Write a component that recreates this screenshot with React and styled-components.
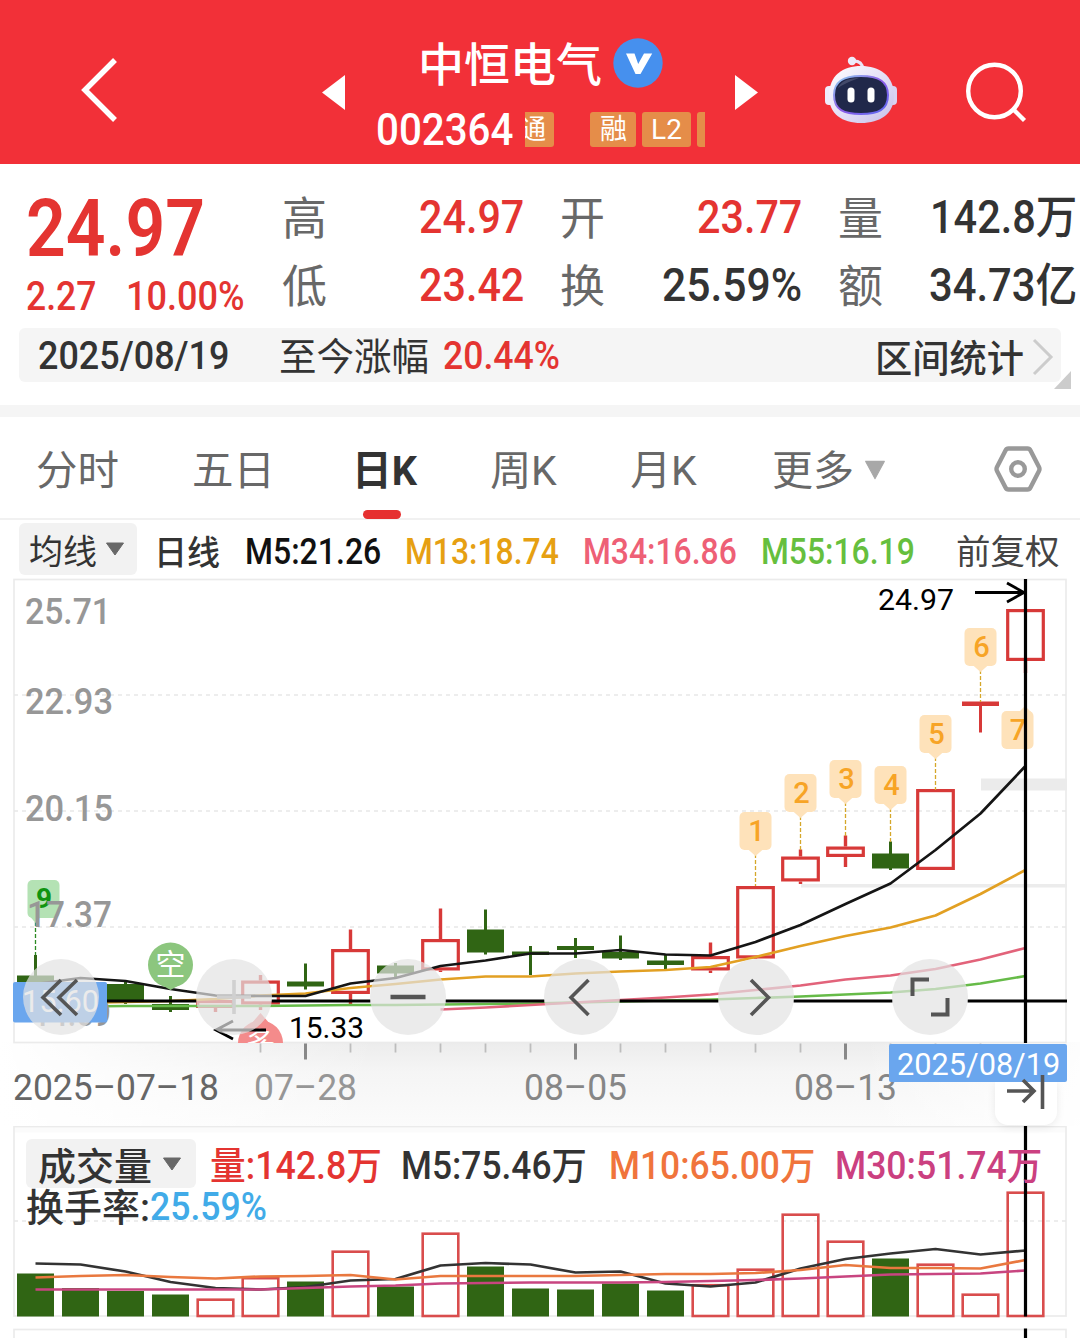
import React, { useLayoutEffect, useRef, useState } from "react";
import styled, { createGlobalStyle } from "styled-components";

const RED = "#e43431";
const GREEN = "#306514";
const FONT = `Roboto, "Noto Sans CJK SC", sans-serif`;

const Global = createGlobalStyle`
  * { box-sizing: border-box; }
  body { margin: 0; background: #fff; font-family: ${FONT}; overflow: hidden; }
  button { border: 0; padding: 0; background: none; font: inherit; color: inherit; }
`;

/* Text condensed or widened horizontally to a given width */
const FitBox = styled.span`
  display: block;
  flex: none;
  width: ${(p) => p.$w}px;
  height: ${(p) => p.$size}px;
  line-height: ${(p) => p.$size}px;
  font-size: ${(p) => p.$size}px;
  font-weight: ${(p) => p.$weight || 400};
  color: ${(p) => p.$color || "inherit"};
  white-space: nowrap;
  transform: translateY(${(p) => p.$dy || 0}px);
`;
const FitInner = styled.span`
  display: inline-block;
  transform-origin: 0 50%;
`;
function Fit({ w, size, weight, color, dy, children }) {
  const ref = useRef(null);
  const [scale, setScale] = useState(1);
  useLayoutEffect(() => {
    setScale(w / ref.current.offsetWidth);
  }, [w]);
  return (
    <FitBox $w={w} $size={size} $weight={weight} $color={color} $dy={dy}>
      <FitInner ref={ref} style={{ transform: `scaleX(${scale})` }}>{children}</FitInner>
    </FitBox>
  );
}

const Page = styled.div`
  width: 1080px;
  height: 1338px;
  overflow: hidden;
  display: flex;
  flex-direction: column;
  background: #fff;
`;

/* Header */
const Header = styled.header`
  flex: none;
  height: 164px;
  background: #f23038;
  color: #fff;
  display: grid;
  grid-template-columns: 81px 241px 54px 359px 90px 141px 1fr;
  align-items: start;
`;
const IconSlot = styled.div`
  padding-top: ${(p) => p.$top}px;
  line-height: 0;
`;
const Center = styled.div`
  display: flex;
  flex-direction: column;
  padding-top: 38px;
`;
const TitleRow = styled.div`
  display: flex;
  align-items: center;
  gap: 11px;
  height: 50px;
  padding-left: 42px;
`;
const CodeRow = styled.div`
  display: flex;
  align-items: center;
  height: 36px;
  margin-top: 23px;
`;
const Tag = styled.span`
  flex: none;
  display: flex;
  align-items: center;
  justify-content: ${(p) => p.$align || "center"};
  width: ${(p) => p.$w}px;
  height: 35px;
  margin-left: ${(p) => p.$gap}px;
  background: #e58d49;
  border-radius: ${(p) => p.$radius || "3px"};
  font-size: 28px;
  line-height: 35px;
  overflow: hidden;
`;

/* Quote */
const Quote = styled.section`
  flex: none;
  height: 164px;
  display: grid;
  grid-template-columns: 256px 1fr;
  padding-left: 26px;
`;
const PriceCol = styled.div`
  padding-top: 26px;
`;
const ChangeRow = styled.div`
  display: flex;
  gap: 30px;
  margin-top: 8px;
`;
const Stats = styled.div`
  display: grid;
  grid-template-columns: 46px 196px 36px 46px 196px 36px 46px 193px;
  grid-template-rows: 68px 68px;
  align-items: center;
  padding-top: 19px;
  height: 155px;
`;
const StatValue = styled.div`
  display: flex;
  justify-content: flex-end;
`;
const Gap = styled.span``;

const RangeBar = styled.section`
  flex: none;
  display: flex;
  align-items: center;
  height: 54px;
  margin: 0 19px;
  padding-left: 19px;
  background: #f5f5f5;
  border-radius: 6px;
  color: #333;
  position: relative;
`;
const Spacer = styled.span`
  flex: none;
  width: ${(p) => p.$w}px;
`;
const Corner = styled.svg`
  position: absolute;
  right: -10px;
  bottom: -7px;
`;
const Band = styled.div`
  flex: none;
  height: 12px;
  margin-top: 23px;
  background: #f5f5f5;
`;

/* Tabs */
const Tabs = styled.nav`
  flex: none;
  height: 103px;
  display: grid;
  grid-template-columns: 156px 161px 138px 140px 142px 222px 1fr;
  padding-left: 35px;
  border-bottom: 2px solid #f1f1f1;
  color: #686868;
`;
const Tab = styled.button`
  position: relative;
  display: flex;
  align-items: center;
  justify-content: flex-start;
  gap: 10px;
  height: 101px;
  padding-top: ${(p) => (p.$icon ? 2 : 5)}px;
  color: ${(p) => (p.$active ? "#333" : "inherit")};
`;
const Underline = styled.i`
  position: absolute;
  left: 11px;
  bottom: -1px;
  width: 38px;
  height: 9px;
  border-radius: 5px;
  background: #e63030;
`;

const Legend = styled.div`
  flex: none;
  display: flex;
  align-items: center;
  height: 58px;
  padding-left: 19px;
  color: #333;
`;
const Picker = styled.button`
  flex: none;
  display: flex;
  align-items: center;
  gap: ${(p) => p.$gap}px;
  width: ${(p) => p.$w}px;
  height: ${(p) => p.$h}px;
  padding-left: ${(p) => p.$pad}px;
  border-radius: 6px;
  background: #f2f2f2;
`;

const ChartArea = styled.section`
  flex: none;
  position: relative;
  height: 548px;
`;
const Layer = styled.svg`
  display: block;
  font-family: ${FONT};
`;
const RoundButton = styled.button`
  position: absolute;
  left: ${(p) => p.$x - 38}px;
  top: 380.5px;
  width: 76px;
  height: 76px;
  border-radius: 50%;
  background: rgba(226, 226, 226, 0.7);
  line-height: 0;
`;
const JumpButton = styled.button`
  position: absolute;
  left: 995px;
  top: 504px;
  width: 62px;
  height: 43px;
  border-radius: 0 0 13px 13px;
  background: #fff;
  box-shadow: 0 2px 8px rgba(0, 0, 0, 0.08);
`;
const CrossDate = styled.div`
  position: absolute;
  left: 889px;
  top: 466px;
  width: 178px;
  height: 38px;
  border-radius: 2px;
  background: #6aa6ee;
  color: #fff;
  display: flex;
  align-items: center;
  padding-left: 8px;
`;
const JumpIcon = styled.svg`
  position: absolute;
  left: 1004px;
  top: 494px;
`;

const Volume = styled.section`
  flex: none;
  display: grid;
  height: 212px;
  > * { grid-area: 1 / 1; }
`;
const VolumeText = styled.div`
  z-index: 1;
  padding: 13px 0 0 26px;
  color: #333;
`;
const VolumeRow = styled.div`
  display: flex;
  align-items: center;
  height: ${(p) => p.$h}px;
`;

const Caret = ({ w, h, color = "#686868" }) => (
  <svg width={w} height={h} viewBox="0 0 20 14" preserveAspectRatio="none">
    <path d="M1.5 1h17L10 13z" fill={color} stroke={color} strokeLinejoin="round" />
  </svg>
);

const Robot = () => (
  <svg width="73" height="70" viewBox="0 0 73 70">
    <defs>
      <linearGradient id="shell" x1="0" y1="0" x2="1" y2="1">
        <stop offset="0" stopColor="#fff" />
        <stop offset=".55" stopColor="#e2ddf6" />
        <stop offset="1" stopColor="#c5bfe8" />
      </linearGradient>
      <linearGradient id="rim" x1="0" y1="0" x2="1" y2="1">
        <stop offset="0" stopColor="#8ed2ee" />
        <stop offset=".5" stopColor="#8e5be8" />
        <stop offset="1" stopColor="#5a6cf0" />
      </linearGradient>
    </defs>
    <path d="M27 6q10-1 11 8" fill="none" stroke="#ebe5f7" strokeWidth="3" />
    <circle cx="27" cy="6" r="4.2" fill="#eeeafa" />
    <rect x="0" y="31" width="10" height="19" rx="4" fill="#efecfb" />
    <rect x="62" y="31" width="10" height="19" rx="4" fill="#d9d3f1" />
    <path d="M36 11C54 11 69 20 69 41c0 18-14 27-33 27S4 59 4 41C4 20 18 11 36 11z" fill="url(#shell)" />
    <path d="M36 21c17 0 27 5 27 19 0 15-10 19-27 19S9 55 9 40c0-14 10-19 27-19z" fill="#20284a" stroke="url(#rim)" strokeWidth="2" />
    <path d="M13 33q4-10 21-10Q20 28 13 33z" fill="#5b6180" opacity=".6" />
    <rect x="22.5" y="32.5" width="7" height="15" rx="3.5" fill="#fff" />
    <rect x="42.5" y="32.5" width="7" height="15" rx="3.5" fill="#fff" />
  </svg>
);

const X = (i) => 35.5 + i * 45;

/* [type, body top, body bottom, wick top, wick bottom] */
const candles = [
  ["g", 975.5, 1000, 955, 1002], ["g", 986, 1000, 984, 1003], ["g", 984, 1000, 980, 1004],
  ["g", 1004, 1010, 996, 1012], ["r", 1000, 1008, 1000, 1012], ["r", 980.5, 1004.5, 975, 1010],
  ["g", 981.5, 986.5, 963.5, 989.5], ["r", 949, 994, 929.5, 1004], ["g", 965.5, 973.5, 963, 978],
  ["r", 939, 970.5, 908.5, 972], ["g", 929.5, 952.5, 909.5, 954.5], ["g", 951.5, 955, 946, 975],
  ["g", 946, 950, 938, 958], ["g", 952, 958.5, 935.5, 960], ["g", 960.5, 965, 955, 969],
  ["r", 956, 970.5, 942.5, 973], ["r", 886, 958.5, 886, 958], ["r", 856.5, 881.5, 849.5, 884],
  ["r", 846.5, 857, 835.5, 867], ["g", 853.5, 868.5, 841.5, 870], ["r", 789, 870, 790, 869],
  ["t", 701.5, 706, 702, 732.5], ["r", 609, 661, 610, 673],
];
const line = (ys, from = 0) => ys.map((y, i) => `${X(i + from)},${y}`).join(" ");
const m5 = line([984, 978, 981, 989, 995.5, 996, 996, 983.5, 978, 966, 960.5, 953.5, 953.5, 950, 954.5, 955.5, 942, 925, 904, 883.5, 850, 813.5, 766]);
const m13 = line([1003, 1003, 1002, 1001, 999, 995.5, 993.5, 988, 984, 979.5, 976.5, 976.5, 973.5, 971.5, 970, 967, 957, 946, 936, 927.5, 915.5, 894, 870]);
const m34 = line([1009.5, 1007.5, 1005, 1002.5, 1000, 997.5, 994.5, 990, 985.5, 979.5, 975.5, 969, 959.5, 948], 9);
const m55 = line([1006.5, 1006.5, 1006, 1006, 1006, 1006, 1005.5, 1005, 1005, 1004.5, 1004, 1003.5, 1002.5, 1001.5, 1000.5, 999.5, 998, 996.5, 994.5, 992.5, 989, 983.5, 976]);

const Candle = ({ i, c: [t, top, bot, hi, lo] }) => {
  const x = X(i);
  const col = t === "g" ? GREEN : "#d73938";
  return (
    <g>
      {t === "r" ? (
        <>
          <path d={`M${x} ${hi}V${top}M${x} ${bot}V${lo}`} stroke={col} strokeWidth="3.4" />
          <rect x={x - 17.8} y={top + 1.6} width="35.6" height={bot - top - 3.2} fill="none" stroke={col} strokeWidth="3.2" />
        </>
      ) : (
        <>
          <path d={`M${x} ${hi}V${lo}`} stroke={col} strokeWidth="3" />
          <rect x={x - 18.5} y={top} width="37" height={bot - top} fill={col} />
        </>
      )}
    </g>
  );
};

/* Label bubble with its dashed leader down to the candle */
const Mark = ({ n, x, y, to }) => (
  <g>
    <path d={`M${x} ${y + 42}V${to}`} stroke="#d5a72a" strokeWidth="1.3" strokeDasharray="4 2" />
    <path d={`M${x - 9} ${y + 36}h18l-9 8z`} fill="#fee2ba" />
    <rect x={x - 16} y={y} width="32" height="38" rx="5" fill="#fee2ba" />
    <text x={x + 1} y={y + 28.5} textAnchor="middle" fontSize="29" fontWeight="500" fill="#f7a426">{n}</text>
  </g>
);

const AxisText = ({ x, y, w, size = 37, color = "#979797", weight = 400, children }) => (
  <text x={x} y={y} fontSize={size} fontWeight={weight} fill={color} textLength={w} lengthAdjust="spacingAndGlyphs">{children}</text>
);

const PriceChart = () => (
  <Layer width="1080" height="548" viewBox="0 578 1080 548">
    <defs>
      <linearGradient id="axisV" x1="0" y1="0" x2="0" y2="1">
        <stop offset="0" stopColor="#ececec" />
        <stop offset=".35" stopColor="#f5f5f5" />
        <stop offset="1" stopColor="#fbfbfb" />
      </linearGradient>
      <linearGradient id="axisH">
        <stop offset="0" stopColor="#fff" />
        <stop offset=".35" stopColor="#fff" stopOpacity="0" />
        <stop offset=".8" stopColor="#fff" stopOpacity="0" />
        <stop offset="1" stopColor="#fff" stopOpacity=".9" />
      </linearGradient>
      <clipPath id="plot"><rect x="14" y="579" width="1053" height="464" /></clipPath>
    </defs>
    <rect x="0" y="1042" width="1080" height="84" fill="url(#axisV)" />
    <rect x="0" y="1042" width="1080" height="84" fill="url(#axisH)" />
    <rect x="14" y="579.5" width="1052" height="463" fill="none" stroke="#ebebeb" strokeWidth="1.7" />
    <path d="M14 695H1066M14 811H1066M14 927H1066" stroke="#e7e7e7" strokeWidth="1.5" strokeDasharray="4 4" />
    <rect x="981" y="778.5" width="86" height="12" fill="#ebebeb" />
    <rect x="801" y="884" width="266" height="3.5" fill="#ececec" />

    <path d="M35.5 922V955" stroke="#2c8a22" strokeWidth="1.3" strokeDasharray="4 2" />
    <path d="M28 914h15l-7.5 9z" fill="#b4e2b4" />
    <rect x="27.5" y="880" width="32" height="38" rx="5" fill="#b4e2b4" />
    <text x="44" y="907.5" textAnchor="middle" fontSize="28" fontWeight="700" fill="#109410">9</text>

    <g clipPath="url(#plot)">
      {candles.map((c, i) => <Candle key={i} i={i} c={c} />)}
      <g fill="none" strokeWidth="2.7" strokeLinejoin="round">
        <polyline points={m55} stroke="#66bb48" />
        <polyline points={m34} stroke="#e2637a" />
        <polyline points={m13} stroke="#e2a023" />
        <polyline points={m5} stroke="#151515" />
      </g>
      <g fill="#f48b8b">
        <circle cx="260.5" cy="1043" r="22.5" />
        <path d="M251 1024l9.5-11 9.5 11z" />
      </g>
      <text x="260.5" y="1054" textAnchor="middle" fontSize="30" fill="#fff">多</text>
    </g>
    <circle cx="170.5" cy="965" r="22.5" fill="#8cc67e" />
    <path d="M158 983h25l-12.5 7z" fill="#8cc67e" />
    <text x="170.5" y="975" textAnchor="middle" fontSize="30" fill="#fff">空</text>

    <Mark n="1" x={755.5} y={812} to={886} />
    <Mark n="2" x={800.5} y={774} to={850} />
    <Mark n="3" x={845.5} y={760} to={836} />
    <Mark n="4" x={890.5} y={766} to={842} />
    <Mark n="5" x={935.5} y={715} to={790} />
    <Mark n="6" x={980.5} y={628} to={702} />
    <path d="M1018 713l7-7 7 7z" fill="#fee2ba" />
    <rect x="1001.5" y="711" width="32" height="38" rx="5" fill="#fee2ba" />
    <text x="1018" y="740" textAnchor="middle" fontSize="29" fontWeight="500" fill="#f7a426">7</text>

    <AxisText x={25} y={623.5} w={86} weight={500}>25.71</AxisText>
    <AxisText x={25} y={713.5} w={88} weight={500}>22.93</AxisText>
    <AxisText x={25} y={820.5} w={88} weight={500}>20.15</AxisText>
    <AxisText x={27} y={927} w={85} weight={500}>17.37</AxisText>
    <AxisText x={33} y={1026} w={78} weight={500}>14.59</AxisText>

    <path d="M107 1001H196.5M271.5 1001H370.5M445.5 1001H544.5M619.5 1001H718.5M793.5 1001H892.5M967.5 1001H1067" stroke="#000" strokeWidth="3" />
    <path d="M1025.5 579V1043" stroke="#000" strokeWidth="3.2" />
    <rect x="13" y="982" width="94" height="40.5" rx="2" fill="#6aa6ee" />
    <AxisText x={22} y={1012} w={77} size={32} color="#fff">15.60</AxisText>

    <g fill="none" stroke="#000" strokeWidth="2.8">
      <path d="M266 1030H216M233 1021l-17 9 17 9" />
      <path d="M975 592.5h49M1007 583l17 9.5-17 9.5" />
    </g>
    <AxisText x={289} y={1038} w={75} size={30} color="#000">15.33</AxisText>
    <AxisText x={878} y={610} w={76} size={30} color="#000">24.97</AxisText>

    {Array.from({ length: 17 }, (_, k) => {
      const major = k % 6 === 1;
      return (
        <path key={k} d={`M${X(k + 5)} 1043.5V${major ? 1059.5 : 1052.5}`} stroke={major ? "#888" : "#bdbdbd"} strokeWidth={major ? 3 : 1.8} />
      );
    })}
    <AxisText x={13} y={1099.5} w={206} weight={450} color="#666">2025–07–18</AxisText>
    <AxisText x={254} y={1099.5} w={103} weight={450} color="#969696">07–28</AxisText>
    <AxisText x={524} y={1099.5} w={103} weight={450} color="#868686">08–05</AxisText>
    <AxisText x={794} y={1099.5} w={103} weight={450} color="#868686">08–13</AxisText>
  </Layer>
);

/* [hollow, bar top] */
const bars = [
  [0, 1273.5], [0, 1288], [0, 1291], [0, 1294.5], [1, 1298.5], [1, 1277], [0, 1281.5], [1, 1250.5],
  [0, 1286.5], [1, 1232.5], [0, 1266.5], [0, 1288.5], [0, 1289.5], [0, 1283.5], [0, 1290.5], [1, 1284],
  [1, 1268.5], [1, 1213.5], [1, 1240.5], [0, 1258.5], [1, 1263.5], [1, 1293.5], [1, 1191.5],
];
const v5 = line([1263.5, 1264.5, 1271.5, 1282, 1288, 1289.5, 1287, 1280.5, 1279, 1265.5, 1263, 1264.5, 1272.5, 1271.5, 1283.5, 1286.5, 1282.5, 1268.5, 1259, 1253.5, 1249, 1254.5, 1250.5]);
const v10 = line([1277.5, 1276, 1275, 1277, 1278.5, 1276.5, 1276, 1275, 1279.5, 1276, 1276, 1276, 1276, 1275, 1274, 1274, 1273, 1270, 1265, 1268, 1268, 1268.5, 1260]);
const v30 = line([1289.5, 1289.5, 1289.5, 1289.5, 1289.5, 1289.5, 1288, 1286.5, 1285.5, 1283.5, 1283, 1282.5, 1282.5, 1282.5, 1282, 1281, 1280, 1278.5, 1276.5, 1274.5, 1274, 1273.5, 1270.5]);

const VolumeChart = () => (
  <Layer width="1080" height="212" viewBox="0 1126 1080 212">
    <rect x="14" y="1126.5" width="1052" height="6" fill="#fbfbfb" />
    <rect x="14" y="1126.5" width="1052" height="189.5" fill="none" stroke="#ebebeb" strokeWidth="1.7" />
    <path d="M14 1221H1066" stroke="#e7e7e7" strokeWidth="1.5" strokeDasharray="4 4" />
    <rect x="14" y="1329.5" width="1052" height="20" fill="none" stroke="#ebebeb" strokeWidth="1.7" />
    {bars.map(([hollow, top], i) =>
      hollow ? (
        <rect key={i} x={X(i) - 17.8} y={top + 1.2} width="35.6" height={1316 - top - 1.2} fill="none" stroke="#d94d4d" strokeWidth="2.6" />
      ) : (
        <rect key={i} x={X(i) - 18.5} y={top} width="37" height={1316.5 - top} fill={GREEN} />
      )
    )}
    <g fill="none" strokeWidth="2.7" strokeLinejoin="round">
      <polyline points={v5} stroke="#333" />
      <polyline points={v10} stroke="#e9783f" />
      <polyline points={v30} stroke="#c84580" />
    </g>
    <path d="M1025.5 1126V1316.5M1025.5 1328.5V1338" stroke="#000" strokeWidth="3.2" />
  </Layer>
);

const Glyph = ({ d, w = 3.6, color = "#555" }) => (
  <svg width="76" height="76" viewBox="0 0 76 76" fill="none" stroke={color} strokeWidth={w}>
    <path d={d} />
  </svg>
);

const stats = [
  ["高", "24.97", 105, RED], ["开", "23.77", 105, RED], ["量", "142.8万", 147, "#333"],
  ["低", "23.42", 105, RED], ["换", "25.59%", 140, "#333"], ["额", "34.73亿", 148, "#333"],
];

export default function App() {
  return (
    <Page>
      <Global />
      <Header>
        <span />
        <IconSlot $top={57}>
          <svg width="38" height="66" viewBox="0 0 38 66" fill="none" stroke="#fff" strokeWidth="5.5">
            <path d="M34 3L4 33l30 30" />
          </svg>
        </IconSlot>
        <IconSlot $top={75}>
          <svg width="23" height="35"><path d="M23 0v35L0 17.5z" fill="#fff" /></svg>
        </IconSlot>
        <Center>
          <TitleRow>
            <Fit w={184} size={46} weight={500} dy={2}>中恒电气</Fit>
            <svg width="50" height="50" viewBox="0 0 50 50">
              <circle cx="25" cy="25" r="24.7" fill="#4690ee" />
              <path d="M13 15.5h8.5l3.7 10.5 5.8-10.5h8.2L27.5 36h-5z" fill="#fff" />
            </svg>
          </TitleRow>
          <CodeRow>
            <Fit w={137} size={45} weight={500}>002364</Fit>
            <Tag $w={29} $gap={12} $align="flex-end" $radius="0 3px 3px 0"><Fit w={25} size={27} dy={1}>通</Fit><Spacer $w={8} /></Tag>
            <Tag $w={46} $gap={36}><Fit w={27} size={28} dy={1}>融</Fit></Tag>
            <Tag $w={49} $gap={6}>L2</Tag>
            <Tag $w={8} $gap={6} $radius="3px 0 0 3px" />
          </CodeRow>
        </Center>
        <IconSlot $top={75}>
          <svg width="23" height="35"><path d="M0 0v35l23-17.5z" fill="#fff" /></svg>
        </IconSlot>
        <IconSlot $top={55}><Robot /></IconSlot>
        <IconSlot $top={61}>
          <svg width="62" height="62" viewBox="0 0 62 62" fill="none" stroke="#fff" strokeWidth="4.4">
            <circle cx="28.5" cy="30" r="26.3" />
            <path d="M47.5 48.5l11 11" />
          </svg>
        </IconSlot>
      </Header>

      <Quote>
        <PriceCol>
          <Fit w={179} size={79} weight={600} color={RED}>24.97</Fit>
          <ChangeRow>
            <Fit w={70} size={40} weight={500} color={RED}>2.27</Fit>
            <Fit w={119} size={40} weight={500} color={RED}>10.00%</Fit>
          </ChangeRow>
        </PriceCol>
        <Stats>
          {stats.map(([label, value, w, color], i) => (
            <React.Fragment key={label}>
              <Fit w={45} size={45} color="#686868" dy={1.5}>{label}</Fit>
              <StatValue><Fit w={w} size={46} weight={500} color={color} dy={-0.5}>{value}</Fit></StatValue>
              {i % 3 < 2 && <Gap />}
            </React.Fragment>
          ))}
        </Stats>
      </Quote>

      <RangeBar>
        <Fit w={191} size={38} weight={500} dy={1}>2025/08/19</Fit>
        <Spacer $w={50} />
        <Fit w={150} size={38} dy={2}>至今涨幅</Fit>
        <Spacer $w={14} />
        <Fit w={117} size={38} weight={500} color={RED} dy={1}>20.44%</Fit>
        <Spacer $w={315} />
        <Fit w={149} size={37.5} weight={500} dy={5}>区间统计</Fit>
        <Spacer $w={8} />
        <svg width="22" height="42" viewBox="0 0 22 42" fill="none" stroke="#ccc" strokeWidth="3">
          <path d="M2 6l17 17L2 40" />
        </svg>
        <Corner width="17" height="18"><path d="M17 0v18H0z" fill="#ccc" /></Corner>
      </RangeBar>
      <Band />

      <Tabs>
        <Tab><Fit w={83} size={41} dy={1}>分时</Fit></Tab>
        <Tab><Fit w={83} size={41} dy={1}>五日</Fit></Tab>
        <Tab $active><Fit w={65} size={41} weight={700} dy={1}>日K</Fit><Underline /></Tab>
        <Tab><Fit w={67} size={41} dy={1}>周K</Fit></Tab>
        <Tab><Fit w={67} size={41} dy={1}>月K</Fit></Tab>
        <Tab><Fit w={82} size={41} dy={1}>更多</Fit><Caret w={22} h={20} color="#a8a8a8" /></Tab>
        <Tab $icon>
          <svg width="48" height="46" viewBox="0 0 48 46" fill="none" stroke="#999" strokeWidth="4.4" strokeLinejoin="round">
            <path d="M14.5 2.5h19q2 0 3 2l8.5 16.5q1 2 0 4L36.5 41.5q-1 2-3 2h-19q-2 0-3-2L3 25q-1-2 0-4l8.5-16.5q1-2 3-2z" />
            <circle cx="24" cy="23" r="6.8" />
          </svg>
        </Tab>
      </Tabs>

      <Legend>
        <Picker $w={118} $h={52} $pad={10} $gap={8}><Fit w={68} size={34.5} dy={3}>均线</Fit><Caret w={20} h={14} /></Picker>
        <Spacer $w={17} />
        <Fit w={66} size={34} weight={500} dy={4}>日线</Fit>
        <Spacer $w={25} />
        <Fit w={136} size={36} weight={500} color="#111" dy={3}>M5:21.26</Fit>
        <Spacer $w={24} />
        <Fit w={154} size={36} weight={500} color="#e6a012" dy={3}>M13:18.74</Fit>
        <Spacer $w={24} />
        <Fit w={154} size={36} weight={500} color="#ee6076" dy={3}>M34:16.86</Fit>
        <Spacer $w={24} />
        <Fit w={154} size={36} weight={500} color="#66bf3e" dy={3}>M55:16.19</Fit>
        <Spacer $w={41} />
        <Fit w={104} size={34.5} color="#444" dy={3}>前复权</Fit>
      </Legend>

      <ChartArea>
        <PriceChart />
        <RoundButton $x={60.5}><Glyph d="M38 21L20 38.5l18 17.5M54 21L36 38.5l18 17.5" /></RoundButton>
        <RoundButton $x={234}><Glyph d="M38 21v34M21 38h34" color="#d0d0d0" /></RoundButton>
        <RoundButton $x={408}><Glyph d="M20.5 38h35" w={4.4} /></RoundButton>
        <RoundButton $x={582}><Glyph d="M44.5 21L27 38.5l17.5 17.5" /></RoundButton>
        <RoundButton $x={756}><Glyph d="M33 21l17.5 17.5L33 56" /></RoundButton>
        <RoundButton $x={930}><Glyph d="M20.5 37V20.5H37M55.5 39v16.5H39" w={4} /></RoundButton>
        <JumpButton />
        <CrossDate><Fit w={163} size={32} dy={1}>2025/08/19</Fit></CrossDate>
        <JumpIcon width="44" height="40" viewBox="0 0 44 40" fill="none" stroke="#555" strokeWidth="3.6">
          <path d="M3 19h27M19 8l11 11-11 11M38.5 3v34" />
        </JumpIcon>
      </ChartArea>

      <Volume>
        <VolumeChart />
        <VolumeText>
          <VolumeRow $h={49}>
            <Picker $w={170} $h={49} $pad={12} $gap={10}><Fit w={114} size={38} weight={500} dy={3}>成交量</Fit><Caret w={20} h={14} /></Picker>
            <Spacer $w={14} />
            <Fit w={172} size={38} weight={500} color={RED} dy={1.5}>量:142.8万</Fit>
            <Spacer $w={19} />
            <Fit w={186} size={38} weight={500} dy={1.5}>M5:75.46万</Fit>
            <Spacer $w={22} />
            <Fit w={206} size={38} weight={500} color="#f0743c" dy={1.5}>M10:65.00万</Fit>
            <Spacer $w={20} />
            <Fit w={207} size={38} weight={500} color="#cb4080" dy={1.5}>M30:51.74万</Fit>
          </VolumeRow>
          <VolumeRow $h={38}>
            <Fit w={124} size={38} weight={500} dy={1}>换手率:</Fit>
            <Fit w={117} size={38} weight={500} color="#41abe8">25.59%</Fit>
          </VolumeRow>
        </VolumeText>
      </Volume>
    </Page>
  );
}
